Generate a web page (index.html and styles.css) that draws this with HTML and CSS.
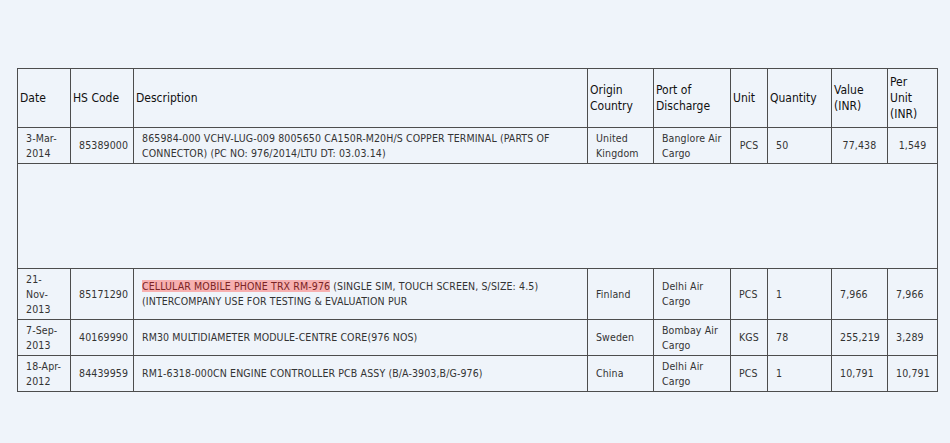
FILE: index.html
```html
<!DOCTYPE html>
<html lang="en">
  <head>
    <meta name="viewport" content="width=device-width, initial-scale=1.0" />
    <title>Import Shipments</title>
    <link rel="stylesheet" href="styles.css">
  </head>
  <body>
    <div class="wrapper">
      <table class="shipments">
        <colgroup>
          <col style="width: 53px" />
          <col style="width: 63px" />
          <col style="width: 454px" />
          <col style="width: 66px" />
          <col style="width: 77px" />
          <col style="width: 37px" />
          <col style="width: 64px" />
          <col style="width: 56px" />
          <col style="width: 50px" />
        </colgroup>
        <thead>
          <tr>
            <th>Date</th>
            <th>HS Code</th>
            <th>Description</th>
            <th>Origin Country</th>
            <th>Port of Discharge</th>
            <th>Unit</th>
            <th>Quantity</th>
            <th>Value (INR)</th>
            <th class="narrow">Per Unit (INR)</th>
          </tr>
        </thead>
        <tbody>
          <tr class="row-short">
            <td>3-Mar-2014</td>
            <td>85389000</td>
            <td>865984-000 VCHV-LUG-009 8005650 CA150R-M20H/S COPPER TERMINAL (PARTS OF CONNECTOR) (PC NO: 976/2014/LTU DT: 03.03.14)</td>
            <td>United Kingdom</td>
            <td>Banglore Air Cargo</td>
            <td class="center">PCS</td>
            <td>50</td>
            <td class="center">77,438</td>
            <td class="center">1,549</td>
          </tr>
          <tr class="row-empty">
            <td colspan="9"></td>
          </tr>
          <tr class="row-tall">
            <td>21-<br />Nov-<br />2013</td>
            <td>85171290</td>
            <td><mark>CELLULAR MOBILE PHONE TRX RM-976</mark> (SINGLE SIM, TOUCH SCREEN, S/SIZE: 4.5) (INTERCOMPANY USE FOR TESTING &amp; EVALUATION PUR</td>
            <td>Finland</td>
            <td>Delhi Air Cargo</td>
            <td>PCS</td>
            <td>1</td>
            <td>7,966</td>
            <td>7,966</td>
          </tr>
          <tr class="row-short">
            <td>7-Sep-2013</td>
            <td>40169990</td>
            <td>RM30 MULTIDIAMETER MODULE-CENTRE CORE(976 NOS)</td>
            <td>Sweden</td>
            <td>Bombay Air Cargo</td>
            <td>KGS</td>
            <td>78</td>
            <td>255,219</td>
            <td>3,289</td>
          </tr>
          <tr class="row-short">
            <td>18-Apr-2012</td>
            <td>84439959</td>
            <td>RM1-6318-000CN ENGINE CONTROLLER PCB ASSY (B/A-3903,B/G-976)</td>
            <td>China</td>
            <td>Delhi Air Cargo</td>
            <td>PCS</td>
            <td>1</td>
            <td>10,791</td>
            <td>10,791</td>
          </tr>
        </tbody>
      </table>
    </div>
  </body>
</html>
```

FILE: styles.css
```css
* {
  margin: 0;
  padding: 0;
  box-sizing: border-box;
}
body {
  background-color: #eff4fa;
  font-family: "DejaVu Sans Condensed", "Liberation Sans", sans-serif;
}
.wrapper {
  padding: 68px 0 0 17px;
}
.shipments {
  width: 920px;
  table-layout: fixed;
  border-collapse: collapse;
  border: 1px solid #4d4d4d;
}
.shipments th,
.shipments td {
  border: 1px solid #4d4d4d;
  vertical-align: middle;
  text-align: left;
}
.shipments th {
  height: 59px;
  padding: 0 2px;
  font-size: 12px;
  font-weight: normal;
  line-height: 16px;
  color: #111111;
}
.shipments th.narrow {
  padding-right: 8px;
}
.shipments td {
  padding: 0 4px 0 8px;
  font-size: 10.5px;
  letter-spacing: 0.12px;
  line-height: 15px;
  color: #333333;
}
.shipments td.center {
  text-align: center;
  padding: 0 4px;
}
.row-short td {
  height: 36px;
}
.row-empty td {
  height: 105px;
}
.row-tall td {
  height: 51px;
}
mark {
  background-color: #f7b0b0;
  color: #7a2424;
}
```
